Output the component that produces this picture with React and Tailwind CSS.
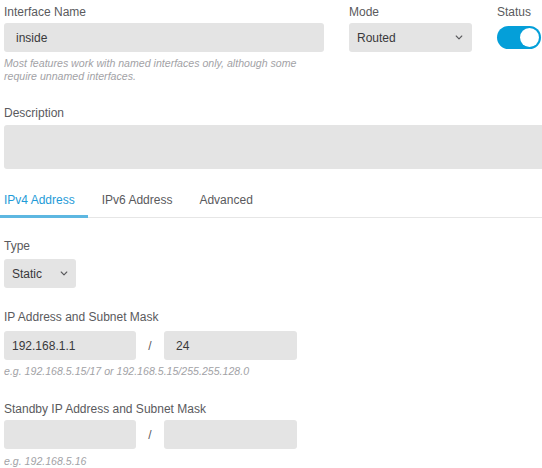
import React from "react";

function Chevron() {
  return (
    <svg width="8" height="5" viewBox="0 0 8 5" fill="none">
      <polyline points="1.2,1 4,3.8 6.8,1" stroke="#5a5a5d" strokeWidth="1.1" strokeLinecap="round" strokeLinejoin="round" />
    </svg>
  );
}

export default function App() {
  return (
    <div className="relative w-[542px] h-[468px] overflow-hidden bg-white font-['Liberation_Sans',Arial,sans-serif] text-[12px] text-[#5a5a5d]">
      {/* Row 1 */}
      <div className="flex pt-[4px] pl-[4px]">
        <div className="w-[320px] shrink-0">
          <div className="leading-[16px] h-[16px]">Interface Name</div>
          <div className="mt-[3px] h-[29px] rounded-[3px] bg-[#e4e4e4] pl-[12px] flex items-center text-[#39393b]">inside</div>
          <div className="mt-[5px] text-[10.6px] italic leading-[13px] text-[#a2a2a6]">
            Most features work with named interfaces only, although some
            <br />
            require unnamed interfaces.
          </div>
        </div>
        <div className="ml-[25px] w-[123px] shrink-0">
          <div className="leading-[16px] h-[16px]">Mode</div>
          <div className="mt-[3px] h-[29px] rounded-[3px] bg-[#e4e4e4] pl-[8px] pr-[9px] flex items-center justify-between text-[#39393b]">
            <span>Routed</span>
            <Chevron />
          </div>
        </div>
        <div className="ml-[25px] shrink-0">
          <div className="leading-[16px] h-[16px]">Status</div>
          <div className="mt-[6px] w-[44px] h-[23px] rounded-full bg-[#049fd9] flex items-center justify-end pr-[2px]">
            <div className="w-[19px] h-[19px] rounded-full bg-white" />
          </div>
        </div>
      </div>

      {/* Description */}
      <div className="mt-[22px] pl-[4px]">
        <div className="leading-[16px] h-[16px]">Description</div>
        <div className="mt-[4px] h-[44px] w-[560px] rounded-[3px] bg-[#e4e4e4]" />
      </div>

      {/* Tabs */}
      <div className="mt-[23px] flex border-b border-[#e6e6e6]">
        <div className="-mb-px pl-[4px] pr-[13px] pb-[7px] leading-[16px] border-b-[3px] border-[#5db7e1] text-[#1f9bd7]">IPv4 Address</div>
        <div className="-mb-px px-[14px] pb-[7px] leading-[16px] border-b-[3px] border-transparent">IPv6 Address</div>
        <div className="-mb-px px-[13px] pb-[7px] leading-[16px] border-b-[3px] border-transparent">Advanced</div>
      </div>

      {/* Type */}
      <div className="mt-[20px] pl-[4px]">
        <div className="leading-[16px] h-[16px]">Type</div>
        <div className="mt-[5px] w-[72px] h-[29px] rounded-[3px] bg-[#e4e4e4] pl-[8px] pr-[8px] flex items-center justify-between text-[#39393b]">
          <span>Static</span>
          <Chevron />
        </div>
      </div>

      {/* IP Address */}
      <div className="mt-[21px] pl-[4px]">
        <div className="leading-[16px] h-[16px]">IP Address and Subnet Mask</div>
        <div className="mt-[6px] flex items-center">
          <div className="w-[132px] h-[29px] rounded-[3px] bg-[#e4e4e4] pl-[8px] flex items-center text-[#39393b]">192.168.1.1</div>
          <div className="w-[28px] text-center">/</div>
          <div className="w-[133px] h-[29px] rounded-[3px] bg-[#e4e4e4] pl-[12px] flex items-center text-[#39393b]">24</div>
        </div>
        <div className="mt-[5px] text-[10.6px] italic leading-[13px] text-[#a2a2a6]">
          e.g. 192.168.5.15/17 or 192.168.5.15/255.255.128.0
        </div>
      </div>

      {/* Standby */}
      <div className="mt-[23px] pl-[4px]">
        <div className="leading-[16px] h-[16px]">Standby IP Address and Subnet Mask</div>
        <div className="mt-[3px] flex items-center">
          <div className="w-[132px] h-[29px] rounded-[3px] bg-[#e4e4e4]" />
          <div className="w-[28px] text-center">/</div>
          <div className="w-[133px] h-[29px] rounded-[3px] bg-[#e4e4e4]" />
        </div>
        <div className="mt-[6px] text-[10.6px] italic leading-[13px] text-[#a2a2a6]">e.g. 192.168.5.16</div>
      </div>
    </div>
  );
}
